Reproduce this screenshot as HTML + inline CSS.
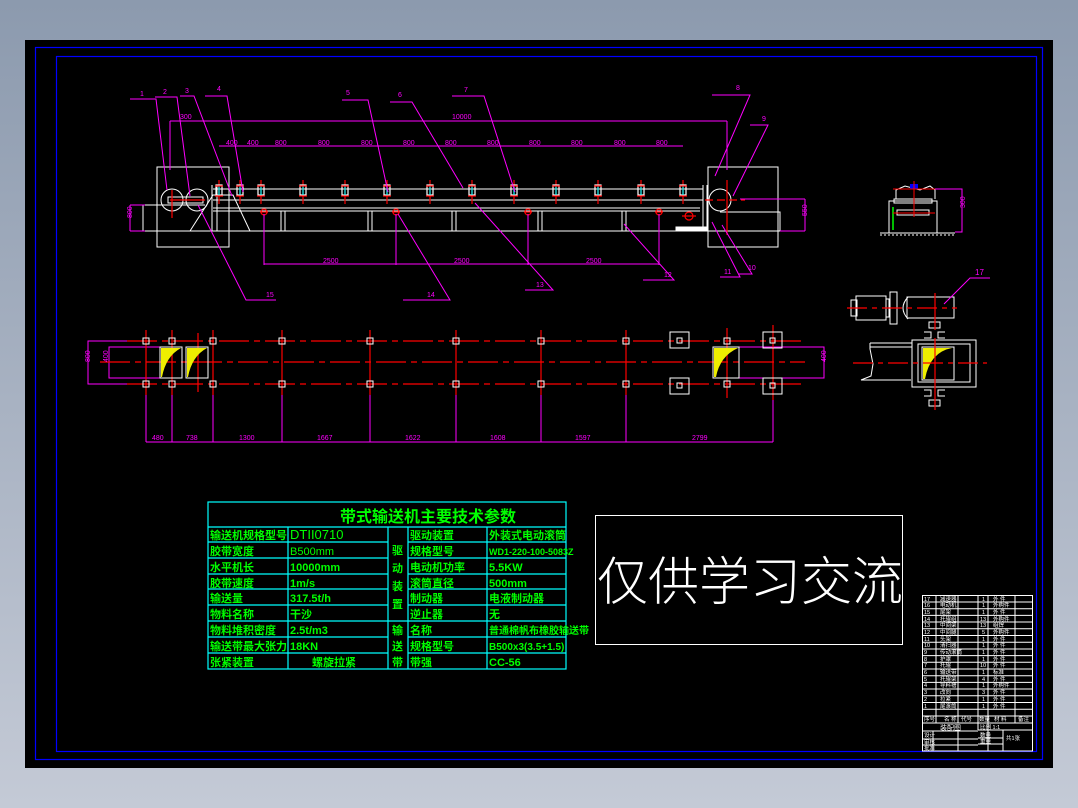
<!DOCTYPE html>
<html><head><meta charset="utf-8"><style>
html,body{margin:0;padding:0;width:1078px;height:808px;overflow:hidden;background:linear-gradient(#8c9aae,#c4cad6);}
svg{position:absolute;left:0;top:0}
.t{font-family:"Liberation Sans","Noto Sans CJK SC",sans-serif}
</style></head><body>
<svg width="1078" height="808" viewBox="0 0 1078 808" xmlns="http://www.w3.org/2000/svg">
<defs>
<g id="idl" stroke-width="1.2"><line x1="0" y1="180" x2="0" y2="204" stroke="#f00"/><rect x="-3" y="185" width="6" height="10" fill="none" stroke="#fff"/><line x1="0" y1="186" x2="0" y2="195" stroke="#0ff"/><line x1="-4" y1="186" x2="4" y2="186" stroke="#f00"/><line x1="-4" y1="196" x2="4" y2="196" stroke="#f00"/></g>
</defs>
<rect x="25" y="40" width="1028" height="728" fill="#000"/>
<rect x="35.5" y="47.5" width="1007" height="712" fill="none" stroke="#0000ff" stroke-width="1.2"/>
<rect x="56.5" y="56.5" width="980" height="695" fill="none" stroke="#0000ff" stroke-width="1.2"/>

<!-- ELEVATION VIEW -->
<g fill="none" stroke="#fff" stroke-width="1">
<rect x="157" y="167" width="72" height="80"/>
<rect x="708" y="167" width="70" height="80"/>
<line x1="213" y1="189" x2="703" y2="189"/>
<line x1="213" y1="200" x2="703" y2="200"/>
<line x1="213" y1="208" x2="700" y2="208"/>
<line x1="213" y1="211" x2="700" y2="211"/>
<line x1="130" y1="231" x2="786" y2="231"/>
<polyline points="143,231 143,205 205,205"/>
<polyline points="780,231 780,212 720,212"/>
<circle cx="172" cy="200" r="11"/><circle cx="197" cy="200" r="11"/>
<rect x="168" y="197" width="35" height="6"/>
<polygon points="190,231 213,195 233,195 250,231"/>
<line x1="212" y1="185" x2="212" y2="231"/><line x1="217" y1="185" x2="217" y2="231"/>
<circle cx="720" cy="200" r="11"/>
<line x1="703" y1="185" x2="703" y2="231"/><line x1="707" y1="185" x2="707" y2="231"/>
<line x1="281" y1="211" x2="281" y2="231"/><line x1="285" y1="211" x2="285" y2="231"/>
<line x1="368" y1="211" x2="368" y2="231"/><line x1="372" y1="211" x2="372" y2="231"/>
<line x1="452" y1="211" x2="452" y2="231"/><line x1="456" y1="211" x2="456" y2="231"/>
<line x1="538" y1="211" x2="538" y2="231"/><line x1="542" y1="211" x2="542" y2="231"/>
<line x1="622" y1="211" x2="622" y2="231"/><line x1="626" y1="211" x2="626" y2="231"/>
<rect x="676" y="227" width="30" height="3" fill="#fff"/>
</g>
<use href="#idl" x="219"/><use href="#idl" x="240"/><use href="#idl" x="261"/><use href="#idl" x="303"/><use href="#idl" x="345"/><use href="#idl" x="387"/><use href="#idl" x="430"/><use href="#idl" x="472"/><use href="#idl" x="514"/><use href="#idl" x="556"/><use href="#idl" x="598"/><use href="#idl" x="641"/><use href="#idl" x="683"/>
<g stroke="#f00" fill="none" stroke-width="1.2">
<circle cx="264" cy="212" r="3"/><circle cx="396" cy="212" r="3"/><circle cx="528" cy="212" r="3"/><circle cx="659" cy="212" r="3"/>
<line x1="260" y1="212" x2="268" y2="212"/><line x1="392" y1="212" x2="400" y2="212"/><line x1="524" y1="212" x2="532" y2="212"/><line x1="655" y1="212" x2="663" y2="212"/>
<line x1="170" y1="200" x2="205" y2="200"/><line x1="172" y1="190" x2="172" y2="218"/>
<line x1="705" y1="200" x2="745" y2="200" stroke-dasharray="8,4"/><line x1="727" y1="180" x2="727" y2="235"/>
<circle cx="689" cy="216" r="4"/><line x1="682" y1="216" x2="696" y2="216"/>
</g>
<g stroke="#f0f" fill="none" stroke-width="1">
<line x1="170" y1="121" x2="727" y2="121"/><line x1="170" y1="121" x2="170" y2="170"/><line x1="727" y1="121" x2="727" y2="170"/>
<line x1="219" y1="146" x2="683" y2="146"/>
<line x1="264" y1="214" x2="264" y2="265"/><line x1="396" y1="214" x2="396" y2="265"/><line x1="528" y1="214" x2="528" y2="265"/><line x1="659" y1="214" x2="659" y2="265"/>
<line x1="264" y1="264" x2="659" y2="264"/>
<polyline points="130,205 130,231"/><line x1="130" y1="205" x2="145" y2="205"/><line x1="130" y1="231" x2="145" y2="231"/>
<polyline points="805,199 805,231"/><line x1="740" y1="199" x2="805" y2="199"/><line x1="780" y1="231" x2="805" y2="231"/>
<polyline points="130,99 156,99 167,190"/><polyline points="155,97 177,97 190,196"/><polyline points="180,96 194,96 232,196"/><polyline points="205,96 227,96 243,192"/>
<polyline points="342,100 368,100 388,192"/><polyline points="390,102 412,102 463,188"/><polyline points="452,96 484,96 515,192"/>
<polyline points="712,95 750,95 715,176"/><polyline points="750,125 768,125 733,196"/>
<polyline points="276,300 246,300 198,205"/><polyline points="403,300 450,300 398,214"/><polyline points="525,290 553,290 475,203"/><polyline points="643,280 674,280 624,224"/><polyline points="720,277 740,277 712,222"/><polyline points="739,274 752,274 722,225"/>
</g>
<g class="t" fill="#f0f" font-size="7">
<text x="140" y="96">1</text><text x="163" y="94">2</text><text x="185" y="93">3</text><text x="217" y="91">4</text><text x="346" y="95">5</text><text x="398" y="97">6</text><text x="464" y="92">7</text><text x="736" y="90">8</text><text x="762" y="121">9</text>
<text x="180" y="119">300</text><text x="452" y="119">10000</text>
<text x="226" y="145">400</text><text x="247" y="145">400</text><text x="275" y="145">800</text><text x="318" y="145">800</text><text x="361" y="145">800</text><text x="403" y="145">800</text><text x="445" y="145">800</text><text x="487" y="145">800</text><text x="529" y="145">800</text><text x="571" y="145">800</text><text x="614" y="145">800</text><text x="656" y="145">800</text>
<text x="323" y="263">2500</text><text x="454" y="263">2500</text><text x="586" y="263">2500</text>
<text x="266" y="297">15</text><text x="427" y="297">14</text><text x="536" y="287">13</text><text x="664" y="277">12</text><text x="724" y="274">11</text><text x="748" y="270">10</text>
<text x="128" y="222" transform="rotate(-90 128 218)">800</text><text x="803" y="220" transform="rotate(-90 803 216)">550</text>
</g>

<!-- PLAN VIEW -->
<g stroke="#f0f" fill="none" stroke-width="1">
<polyline points="127,341 88,341 88,384 127,384"/>
<polyline points="160,347 109,347 109,378 160,378"/>
<polyline points="738,347 824,347 824,378 738,378"/>
<line x1="146" y1="442" x2="773" y2="442"/>
<line x1="146" y1="384" x2="146" y2="442"/><line x1="172" y1="388" x2="172" y2="442"/><line x1="213" y1="388" x2="213" y2="442"/><line x1="282" y1="388" x2="282" y2="442"/><line x1="370" y1="388" x2="370" y2="442"/><line x1="456" y1="388" x2="456" y2="442"/><line x1="541" y1="388" x2="541" y2="442"/><line x1="626" y1="388" x2="626" y2="442"/><line x1="773" y1="400" x2="773" y2="442"/>
</g>
<g stroke="#f00" stroke-width="1.2" fill="none">
<line x1="127" y1="341" x2="805" y2="341" stroke-dasharray="30,5,6,5"/>
<line x1="127" y1="384" x2="805" y2="384" stroke-dasharray="30,5,6,5"/>
<line x1="100" y1="362" x2="805" y2="362" stroke-dasharray="30,5,6,5"/>
<line x1="146" y1="330" x2="146" y2="395"/><line x1="172" y1="330" x2="172" y2="395"/><line x1="198" y1="333" x2="198" y2="392"/><line x1="213" y1="330" x2="213" y2="395"/><line x1="282" y1="330" x2="282" y2="395"/><line x1="370" y1="330" x2="370" y2="395"/><line x1="456" y1="330" x2="456" y2="395"/><line x1="541" y1="330" x2="541" y2="395"/><line x1="626" y1="330" x2="626" y2="395"/><line x1="727" y1="328" x2="727" y2="398"/><line x1="773" y1="325" x2="773" y2="400"/>
</g>
<g fill="none" stroke="#fff" stroke-width="1">
<rect x="143" y="338" width="6" height="6"/><rect x="169" y="338" width="6" height="6"/><rect x="210" y="338" width="6" height="6"/><rect x="279" y="338" width="6" height="6"/><rect x="367" y="338" width="6" height="6"/><rect x="453" y="338" width="6" height="6"/><rect x="538" y="338" width="6" height="6"/><rect x="623" y="338" width="6" height="6"/><rect x="724" y="338" width="6" height="6"/>
<rect x="143" y="381" width="6" height="6"/><rect x="169" y="381" width="6" height="6"/><rect x="210" y="381" width="6" height="6"/><rect x="279" y="381" width="6" height="6"/><rect x="367" y="381" width="6" height="6"/><rect x="453" y="381" width="6" height="6"/><rect x="538" y="381" width="6" height="6"/><rect x="623" y="381" width="6" height="6"/><rect x="724" y="381" width="6" height="6"/>
<rect x="670" y="332" width="19" height="16"/><rect x="677" y="338" width="5" height="5"/>
<rect x="670" y="378" width="19" height="16"/><rect x="677" y="383" width="5" height="5"/>
<rect x="763" y="332" width="19" height="16"/><rect x="770" y="338" width="5" height="5"/>
<rect x="763" y="378" width="19" height="16"/><rect x="770" y="383" width="5" height="5"/>
<rect x="160" y="347" width="22" height="31"/><rect x="186" y="347" width="22" height="31"/><rect x="713" y="347" width="26" height="31"/>
</g>
<g fill="#ee0">
<path d="M161,348 L181,348 Q166,356 162,377 L161,377Z"/><path d="M187,348 L207,348 Q192,356 188,377 L187,377Z"/><path d="M714,348 L738,348 Q720,356 716,377 L714,377Z"/>
</g>
<g class="t" fill="#f0f" font-size="7">
<text x="152" y="440">480</text><text x="186" y="440">738</text><text x="239" y="440">1300</text><text x="317" y="440">1667</text><text x="405" y="440">1622</text><text x="490" y="440">1608</text><text x="575" y="440">1597</text><text x="692" y="440">2799</text>
<text x="86" y="366" transform="rotate(-90 86 362)">800</text><text x="104" y="366" transform="rotate(-90 104 362)">400</text><text x="822" y="366" transform="rotate(-90 822 362)">400</text>
</g>

<!-- SIDE VIEW -->
<g fill="none" stroke="#fff" stroke-width="1">
<rect x="889" y="201" width="48" height="32"/>
<rect x="894" y="199" width="38" height="4"/>
<rect x="897" y="210" width="32" height="5"/>
<line x1="880" y1="233" x2="955" y2="233"/>
<polyline points="896,199 896,190 905,186 920,190 930,186 935,190 935,199"/>
</g>
<line x1="880" y1="235" x2="955" y2="235" stroke="#fff" stroke-dasharray="2,2"/>
<rect x="910" y="184" width="8" height="5" fill="#00f"/>
<line x1="893" y1="207" x2="893" y2="230" stroke="#0f0" stroke-width="1.5"/>
<g stroke="#f00" stroke-width="1"><line x1="893" y1="189" x2="943" y2="189"/><line x1="893" y1="213" x2="935" y2="213"/><line x1="914" y1="181" x2="914" y2="217"/></g>
<g stroke="#f0f" fill="none"><polyline points="935,189 962,189 962,232 955,232"/></g>
<text class="t" x="961" y="212" font-size="7" fill="#f0f" transform="rotate(-90 961 208)">300</text>

<!-- DETAIL 17 -->
<g fill="none" stroke="#fff" stroke-width="1">
<rect x="851" y="300" width="6" height="16"/><rect x="856" y="296" width="30" height="24"/><rect x="886" y="299" width="3" height="18"/><rect x="890" y="292" width="7" height="32"/>
<path d="M908,297 Q898,308 908,319"/><rect x="907" y="297" width="47" height="21"/>
<rect x="929" y="322" width="11" height="6"/>
<path d="M924,332 h7 v6 h-7 M945,332 h-7 v6 h7"/>
<rect x="912" y="340" width="64" height="47"/><rect x="918" y="344" width="52" height="38"/><rect x="922" y="347" width="32" height="33"/>
<path d="M870,343 h42 M870,347 h42 M870,343 v6 l3,15 -2,12 -10,4 h50"/>
<path d="M924,390 h7 v6 h-7 M945,390 h-7 v6 h7"/><rect x="929" y="400" width="11" height="6"/>
</g>
<path d="M923,348 L952,348 Q930,352 925,379 L923,379Z" fill="#ee0"/>
<g stroke="#f00" stroke-width="1.2"><line x1="847" y1="308" x2="957" y2="308" stroke-dasharray="20,5,5,5"/><line x1="935" y1="293" x2="935" y2="330"/><line x1="853" y1="363" x2="987" y2="363" stroke-dasharray="20,5,5,5"/><line x1="935" y1="338" x2="935" y2="410"/></g>
<polyline points="944,304 970,278 990,278" fill="none" stroke="#f0f"/>
<text class="t" x="975" y="275" font-size="8" fill="#f0f">17</text>

<!-- PARAMETER TABLE -->
<g fill="none" stroke="#0ff" stroke-width="1.2">
<rect x="208" y="502" width="358" height="167"/>
<line x1="208" y1="527" x2="566" y2="527"/>
<line x1="288" y1="527" x2="288" y2="669"/><line x1="388" y1="527" x2="388" y2="669"/><line x1="408" y1="527" x2="408" y2="669"/><line x1="487" y1="527" x2="487" y2="669"/>
<line x1="208" y1="542" x2="388" y2="542"/><line x1="408" y1="542" x2="566" y2="542"/>
<line x1="208" y1="558" x2="388" y2="558"/><line x1="408" y1="558" x2="566" y2="558"/>
<line x1="208" y1="574" x2="388" y2="574"/><line x1="408" y1="574" x2="566" y2="574"/>
<line x1="208" y1="589" x2="388" y2="589"/><line x1="408" y1="589" x2="566" y2="589"/>
<line x1="208" y1="605" x2="388" y2="605"/><line x1="408" y1="605" x2="566" y2="605"/>
<line x1="208" y1="621" x2="566" y2="621"/>
<line x1="208" y1="637" x2="388" y2="637"/><line x1="408" y1="637" x2="566" y2="637"/>
<line x1="208" y1="653" x2="388" y2="653"/><line x1="408" y1="653" x2="566" y2="653"/>
</g>
<g class="t" fill="#0f0" font-size="11" font-weight="bold">
<text x="340" y="522" font-size="16">带式输送机主要技术参数</text>
<text x="210" y="539">输送机规格型号</text><text x="210" y="555">胶带宽度</text><text x="210" y="571">水平机长</text><text x="210" y="587">胶带速度</text><text x="210" y="602">输送量</text><text x="210" y="618">物料名称</text><text x="210" y="634">物料堆积密度</text><text x="210" y="650">输送带最大张力</text><text x="210" y="666">张紧装置</text>
<text x="290" y="555" font-weight="normal">B500mm</text><text x="290" y="571">10000mm</text><text x="290" y="587">1m/s</text><text x="290" y="602">317.5t/h</text><text x="290" y="618">干沙</text><text x="290" y="634">2.5t/m3</text><text x="290" y="650">18KN</text><text x="312" y="666">螺旋拉紧</text>
<text x="392" y="554">驱</text><text x="392" y="572">动</text><text x="392" y="590">装</text><text x="392" y="608">置</text>
<text x="392" y="634">输</text><text x="392" y="650">送</text><text x="392" y="666">带</text>
<text x="410" y="539">驱动装置</text><text x="410" y="555">规格型号</text><text x="410" y="571">电动机功率</text><text x="410" y="587">滚筒直径</text><text x="410" y="602">制动器</text><text x="410" y="618">逆止器</text><text x="410" y="634">名称</text><text x="410" y="650">规格型号</text><text x="410" y="666">带强</text>
<text x="489" y="539">外装式电动滚筒</text><text x="489" y="555" font-size="9">WD1-220-100-5083Z</text><text x="489" y="571">5.5KW</text><text x="489" y="587">500mm</text><text x="489" y="602">电液制动器</text><text x="489" y="618">无</text><text x="489" y="634" font-size="10">普通棉帆布橡胶输送带</text><text x="489" y="650" font-size="10">B500x3(3.5+1.5)</text><text x="489" y="666">CC-56</text>
</g>
<text class="t" x="290" y="539" font-size="13" fill="#0f0">DTII0710</text>

<!-- WATERMARK -->
<rect x="595.5" y="515.5" width="307" height="129" fill="none" stroke="#fff"/>
<text x="597" y="600" font-family="'Noto Sans CJK SC','WenQuanYi Zen Hei',sans-serif" font-size="52" fill="#fff" font-weight="300" textLength="306" lengthAdjust="spacingAndGlyphs">仅供学习交流</text>

<!-- TITLE BLOCK -->
<g fill="none" stroke="#fff" stroke-width="1">
<rect x="922.5" y="595.5" width="110" height="155.5"/>
<line x1="936" y1="595" x2="936" y2="723"/><line x1="958" y1="595" x2="958" y2="723"/><line x1="978" y1="595" x2="978" y2="730"/><line x1="988" y1="595" x2="988" y2="723"/><line x1="1015" y1="595" x2="1015" y2="723"/>
<path d="M922,602h111M922,608.7h111M922,615.4h111M922,622h111M922,628.8h111M922,635.5h111M922,642.2h111M922,649h111M922,655.6h111M922,662.3h111M922,669h111M922,675.7h111M922,682.4h111M922,689h111M922,695.8h111M922,702.5h111M922,709.2h111M922,716h111M922,723h111"/>
<line x1="978" y1="730" x2="1033" y2="730"/><line x1="988" y1="723" x2="988" y2="751"/><line x1="1003" y1="730" x2="1003" y2="751"/>
<line x1="922" y1="731" x2="978" y2="731"/><line x1="922" y1="739" x2="978" y2="739"/><line x1="922" y1="745" x2="978" y2="745"/>
<line x1="933" y1="731" x2="933" y2="751"/><line x1="958" y1="731" x2="958" y2="751"/>
<line x1="978" y1="738" x2="1003" y2="738"/><line x1="978" y1="744" x2="1003" y2="744"/>
</g>
<g class="t" fill="#fff" font-size="5.5">
<text x="924" y="601">17</text><text x="940" y="601">减速器</text><text x="982" y="601">1</text><text x="993" y="601">外 件</text>
<text x="924" y="607">16</text><text x="940" y="607">电动机</text><text x="982" y="607">1</text><text x="993" y="607">外购件</text>
<text x="924" y="614">15</text><text x="940" y="614">尾架</text><text x="982" y="614">1</text><text x="993" y="614">外 件</text>
<text x="924" y="621">14</text><text x="940" y="621">托辊组</text><text x="980" y="621">13</text><text x="993" y="621">外购件</text>
<text x="924" y="627">13</text><text x="940" y="627">中间架</text><text x="980" y="627">13</text><text x="993" y="627">组焊</text>
<text x="924" y="634">12</text><text x="940" y="634">中间腿</text><text x="982" y="634">5</text><text x="993" y="634">外购件</text>
<text x="924" y="641">11</text><text x="940" y="641">头架</text><text x="982" y="641">1</text><text x="993" y="641">外 件</text>
<text x="924" y="647">10</text><text x="940" y="647">清扫器</text><text x="982" y="647">1</text><text x="993" y="647">外 件</text>
<text x="924" y="654">9</text><text x="940" y="654">传动滚筒</text><text x="982" y="654">1</text><text x="993" y="654">外 件</text>
<text x="924" y="661">8</text><text x="940" y="661">护罩</text><text x="982" y="661">1</text><text x="993" y="661">外 件</text>
<text x="924" y="667">7</text><text x="940" y="667">托辊</text><text x="980" y="667">10</text><text x="993" y="667">外 件</text>
<text x="924" y="674">6</text><text x="940" y="674">输送带</text><text x="982" y="674">1</text><text x="993" y="674">标准</text>
<text x="924" y="681">5</text><text x="940" y="681">托辊架</text><text x="982" y="681">4</text><text x="993" y="681">外 件</text>
<text x="924" y="687">4</text><text x="940" y="687">导料槽</text><text x="982" y="687">1</text><text x="993" y="687">外购件</text>
<text x="924" y="694">3</text><text x="940" y="694">改向</text><text x="982" y="694">3</text><text x="993" y="694">外 件</text>
<text x="924" y="701">2</text><text x="940" y="701">拉紧</text><text x="982" y="701">1</text><text x="993" y="701">外 件</text>
<text x="924" y="708">1</text><text x="940" y="708">尾滚筒</text><text x="982" y="708">1</text><text x="993" y="708">外 件</text>
<text x="924" y="721">序号</text><text x="944" y="721">名 称</text><text x="961" y="721">代号</text><text x="979" y="721">数量</text><text x="994" y="721">材 料</text><text x="1018" y="721">备注</text>
<text x="940" y="730" font-size="7">装配图</text><text x="924" y="737">设计</text><text x="924" y="744">审核</text><text x="924" y="750">批准</text><text x="980" y="729">比例 1:1</text><text x="980" y="737">数量</text><text x="980" y="743">重量</text><text x="1006" y="740">共1张</text>
</g>
</svg>
</body></html>
